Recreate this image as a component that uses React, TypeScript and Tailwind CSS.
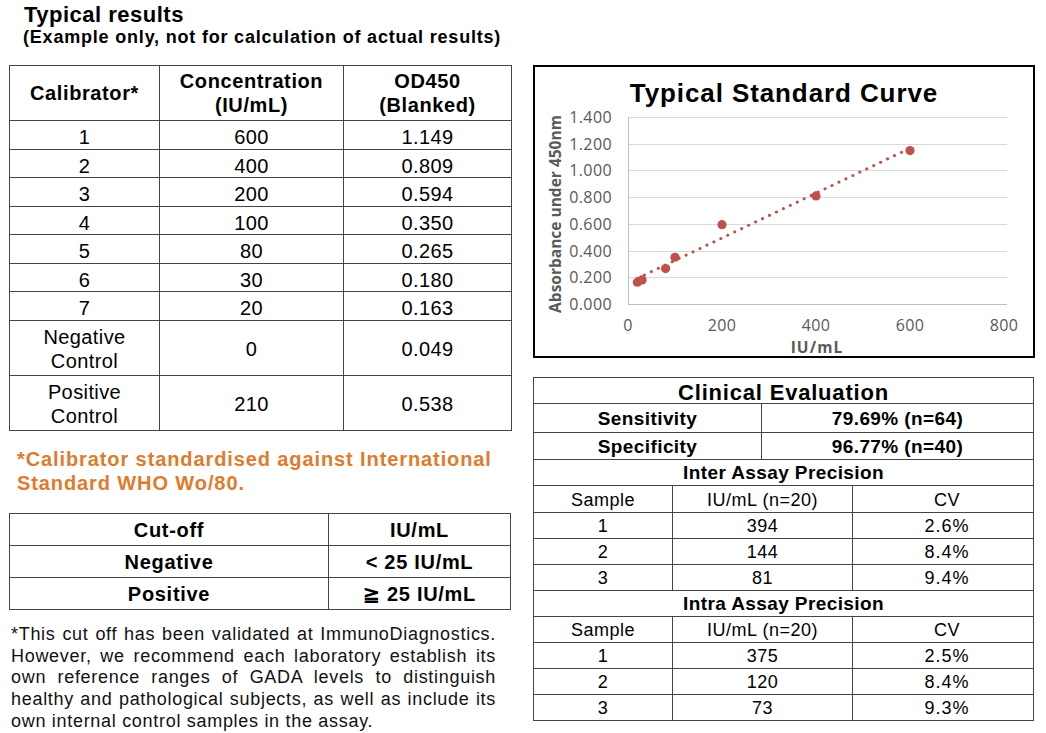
import React from 'react';

const calibrators = [
    { cal: '1', conc: '600', od: '1.149', h: 'h-[29px]' },
    { cal: '2', conc: '400', od: '0.809', h: 'h-[28px]' },
    { cal: '3', conc: '200', od: '0.594', h: 'h-[29px]' },
    { cal: '4', conc: '100', od: '0.350', h: 'h-[28px]' },
    { cal: '5', conc: '80', od: '0.265', h: 'h-[29px]' },
    { cal: '6', conc: '30', od: '0.180', h: 'h-[28px]' },
    { cal: '7', conc: '20', od: '0.163', h: 'h-[29px]' },
];

const points: [number, number][] = [
    [20, 0.163], [30, 0.18], [80, 0.265], [100, 0.35], [200, 0.594], [400, 0.809], [600, 1.149],
];

// plot area inside the svg
const X0 = 93;
const XS = 376 / 800;
const Y0 = 196;
const YS = 187 / 1.4;
const px = (v: number) => X0 + v * XS;
const py = (v: number) => Y0 - v * YS;

const StandardCurve = () => {
    const ticksY = [0, 0.2, 0.4, 0.6, 0.8, 1.0, 1.2, 1.4];
    const ticksX = [0, 200, 400, 600, 800];
    return (
        <svg width="497" height="247" className="block overflow-visible font-['Open_Sans',sans-serif]">
            {ticksY.map((t) => (
                <line key={t} x1={X0} x2={472} y1={Math.round(py(t)) + 0.5} y2={Math.round(py(t)) + 0.5} stroke={t === 0 ? '#bfbfbf' : '#d9d9d9'} strokeWidth="1" />
            ))}
            <line x1={X0 + 0.5} x2={X0 + 0.5} y1={Math.round(py(1.4))} y2={Y0 + 1} stroke="#bfbfbf" strokeWidth="1" />
            {ticksY.map((t) => (
                <text key={t} x={77} y={py(t)} textAnchor="end" dominantBaseline="central" fontSize="16" letterSpacing="0.4" fill="#595959">
                    {t.toFixed(3)}
                </text>
            ))}
            {ticksX.map((t) => (
                <text key={t} x={px(t)} y={217} textAnchor="middle" dominantBaseline="central" fontSize="16" letterSpacing="0.4" fill="#595959">
                    {t}
                </text>
            ))}
            <text x={282} y={238.5} textAnchor="middle" dominantBaseline="central" fontSize="15.5" fontWeight="700" letterSpacing="1.1" fill="#595959">
                IU/mL
            </text>
            <text transform="translate(20,106) rotate(-90)" textAnchor="middle" dominantBaseline="central" fontSize="15.5" fontWeight="700" fill="#595959">
                Absorbance under 450nm
            </text>
            {/* linear trendline */}
            <line x1={px(20)} y1={py(0.192)} x2={px(600)} y2={py(1.166)} stroke="#c0504d" strokeWidth="3" strokeDasharray="0.1 7.6" strokeLinecap="round" />
            {points.map(([x, y]) => (
                <circle key={x} cx={px(x)} cy={py(y)} r="4.6" fill="#c0504d" />
            ))}
        </svg>
    );
};

const precisionRows = (rows: string[][]) =>
    rows.map(([s, v, cv]) => (
        <div key={s} className="flex h-[26px] border-b border-[#444] text-[18px] tracking-[0.5px]">
            <div className="w-[139px] border-r border-[#444] flex items-center justify-center pt-[2px]">{s}</div>
            <div className="w-[180px] border-r border-[#444] flex items-center justify-center pt-[2px]">{v}</div>
            <div className="flex-1 flex items-center justify-center pt-[2px] pl-[8px] tracking-[1px]">{cv}</div>
        </div>
    ));

const App = () => {
    return (
        <div className="w-[1046px] h-[733px] bg-white text-black font-['Liberation_Sans',Arial,sans-serif] flex overflow-hidden">
            {/* Left column */}
            <div className="w-[503px] ml-[9px] flex flex-col shrink-0">
                <div className="pl-[15px] pt-[2px]">
                    <h1 className="text-[22px] leading-[25px] font-bold tracking-[0.5px]">Typical results</h1>
                    <p className="text-[18px] leading-[20px] font-bold tracking-[0.8px] -ml-px">
                        (Example only, not for calculation of actual results)
                    </p>
                </div>

                {/* Calibrator table */}
                <div className="mt-[18px] border-t border-l border-r border-[#444]">
                    <div className="flex h-[55px] border-b border-[#444] text-[20px] leading-[24px] font-bold tracking-[0.6px]">
                        <div className="w-[150px] border-r border-[#444] flex items-center justify-center">Calibrator*</div>
                        <div className="w-[184px] border-r border-[#444] flex items-center justify-center text-center">
                            Concentration<br />(IU/mL)
                        </div>
                        <div className="flex-1 flex items-center justify-center text-center">
                            OD450<br />(Blanked)
                        </div>
                    </div>
                    {calibrators.map((r) => (
                        <div key={r.cal} className={`flex ${r.h} border-b border-[#444] text-[20px] tracking-[0.4px]`}>
                            <div className="w-[150px] border-r border-[#444] flex items-center justify-center pt-[4px]">{r.cal}</div>
                            <div className="w-[184px] border-r border-[#444] flex items-center justify-center pt-[4px]">{r.conc}</div>
                            <div className="flex-1 flex items-center justify-center pt-[4px]">{r.od}</div>
                        </div>
                    ))}
                    {[
                        ['Negative', '0', '0.049'],
                        ['Positive', '210', '0.538'],
                    ].map(([k, c, od]) => (
                        <div key={k} className="flex h-[55px] border-b border-[#444] text-[20px] leading-[24px] tracking-[0.4px]">
                            <div className="w-[150px] border-r border-[#444] flex items-center justify-center text-center pt-[2px]">
                                {k}<br />Control
                            </div>
                            <div className="w-[184px] border-r border-[#444] flex items-center justify-center pt-[2px]">{c}</div>
                            <div className="flex-1 flex items-center justify-center pt-[2px]">{od}</div>
                        </div>
                    ))}
                </div>

                <p className="mt-[16px] pl-[8px] text-[20px] leading-[24px] font-bold tracking-[0.9px] text-[#df7b2d]">
                    *Calibrator standardised against International<br />
                    Standard WHO Wo/80.
                </p>

                {/* Cut-off table */}
                <div className="mt-[18px] w-[502px] border-t border-l border-r border-[#444] text-[20px] font-bold tracking-[0.7px]">
                    {[
                        ['Cut-off', 'IU/mL'],
                        ['Negative', '< 25 IU/mL'],
                        ['Positive', '≧ 25 IU/mL'],
                    ].map(([k, v]) => (
                        <div key={k} className="flex h-[32px] border-b border-[#444]">
                            <div className="w-[319px] border-r border-[#444] flex items-center justify-center pt-[1px]">{k}</div>
                            <div className="flex-1 flex items-center justify-center pt-[1px]">{v}</div>
                        </div>
                    ))}
                </div>

                <div className="mt-[14px] ml-[2px] w-[485px] text-[18px] leading-[21.7px] tracking-[0.7px] text-[#111]">
                    <div className="whitespace-nowrap [text-align-last:justify]">*This cut off has been validated at ImmunoDiagnostics.</div>
                    <div className="whitespace-nowrap [text-align-last:justify]">However, we recommend each laboratory establish its</div>
                    <div className="whitespace-nowrap [text-align-last:justify]">own reference ranges of GADA levels to distinguish</div>
                    <div className="whitespace-nowrap [text-align-last:justify]">healthy and pathological subjects, as well as include its</div>
                    <div className="whitespace-nowrap">own internal control samples in the assay.</div>
                </div>
            </div>

            {/* Right column */}
            <div className="ml-[21px] flex flex-col">
                <div className="mt-[65px] w-[502px] h-[293px] border-2 border-black flex flex-col">
                    <div className="pt-[12px] text-center text-[26px] leading-[29px] font-bold tracking-[0.9px]">
                        Typical Standard Curve
                    </div>
                    <StandardCurve />
                </div>

                <div className="mt-[19px] w-[501px] border-t border-l border-r border-[#444]">
                    <div className="h-[26px] border-b border-[#444] flex items-center justify-center pt-[3px] text-[22px] font-bold tracking-[0.8px]">
                        Clinical Evaluation
                    </div>
                    {[
                        ['Sensitivity', '79.69% (n=64)', 'h-[29px]'],
                        ['Specificity', '96.77% (n=40)', 'h-[27px]'],
                    ].map(([k, v, h]) => (
                        <div key={k} className={`flex ${h} border-b border-[#444] text-[19px] font-bold tracking-[0.4px]`}>
                            <div className="w-[228px] border-r border-[#444] flex items-center justify-center pt-[2px]">{k}</div>
                            <div className="flex-1 flex items-center justify-center pt-[2px]">{v}</div>
                        </div>
                    ))}
                    <div className="h-[26px] border-b border-[#444] flex items-center justify-center pt-[2px] text-[19px] font-bold tracking-[0.4px]">
                        Inter Assay Precision
                    </div>
                    <div className="flex h-[27px] border-b border-[#444] text-[18px] tracking-[0.5px]">
                        <div className="w-[139px] border-r border-[#444] flex items-center justify-center pt-[2px]">Sample</div>
                        <div className="w-[180px] border-r border-[#444] flex items-center justify-center pt-[2px]">IU/mL (n=20)</div>
                        <div className="flex-1 flex items-center justify-center pt-[2px] pl-[8px]">CV</div>
                    </div>
                    {precisionRows([
                        ['1', '394', '2.6%'],
                        ['2', '144', '8.4%'],
                        ['3', '81', '9.4%'],
                    ])}
                    <div className="h-[26px] border-b border-[#444] flex items-center justify-center pt-[2px] text-[19px] font-bold tracking-[0.4px]">
                        Intra Assay Precision
                    </div>
                    <div className="flex h-[26px] border-b border-[#444] text-[18px] tracking-[0.5px]">
                        <div className="w-[139px] border-r border-[#444] flex items-center justify-center pt-[2px]">Sample</div>
                        <div className="w-[180px] border-r border-[#444] flex items-center justify-center pt-[2px]">IU/mL (n=20)</div>
                        <div className="flex-1 flex items-center justify-center pt-[2px] pl-[8px]">CV</div>
                    </div>
                    {precisionRows([
                        ['1', '375', '2.5%'],
                        ['2', '120', '8.4%'],
                        ['3', '73', '9.3%'],
                    ])}
                </div>
            </div>
        </div>
    );
};

export default App;
